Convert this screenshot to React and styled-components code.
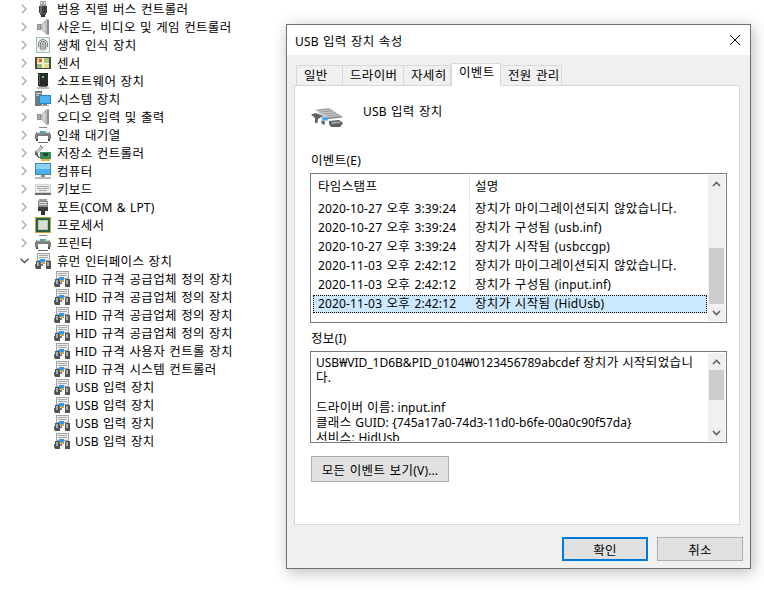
import React from 'react'
import styled, { createGlobalStyle } from 'styled-components'

const GlobalStyle = createGlobalStyle`
    html, body {
        margin: 0;
        padding: 0;
        background: #fff;
    }
    body {
        font-family: "Noto Sans", "Noto Sans CJK KR", sans-serif;
        font-size: 12px;
        letter-spacing: 0.15px;
        word-spacing: 1px;
        color: #000;
    }
`

// hangul runs are set slightly larger, Malgun Gothic fills its box more than Noto does
const Ko = styled.span`
    font-size: 12.5px;
    letter-spacing: 0.35px;
`
const Txt = ({ children }) => (
    <span>
        {children
            .split(/([\uAC00-\uD7A3]+)/)
            .map((part, i) => (i % 2 ? <Ko key={i}>{part}</Ko> : part))}
    </span>
)

// device icons, all drawn on a 16x16 grid
const Svg = ({ children }) => (
    <svg width="16" height="16" viewBox="0 0 16 16" shapeRendering="crispEdges">
        {children}
    </svg>
)

const UsbIcon = () => (
    <Svg>
        <rect x="5" y="0" width="6" height="5" fill="#a2a2a2" />
        <rect x="6" y="1" width="1" height="2" fill="#f4f4f4" />
        <rect x="9" y="1" width="1" height="2" fill="#f4f4f4" />
        <rect x="4" y="5" width="8" height="7" fill="#3e3e3e" />
        <rect x="5" y="5" width="2" height="7" fill="#6a6a6a" />
        <rect x="5" y="12" width="6" height="2" fill="#4c4c4c" />
        <rect x="6" y="14" width="4" height="2" fill="#2c2c2c" />
    </Svg>
)

const SpeakerIcon = () => (
    <Svg>
        <rect x="2" y="5" width="4" height="6" fill="#8a8a8a" />
        <rect x="3" y="6" width="2" height="4" fill="#b0b0b0" />
        <path d="M6 5 L12 0 H14 V16 H12 L6 11 Z" fill="#bcbcbc" />
        <rect x="8" y="4" width="2" height="8" fill="#d6d6d6" />
        <rect x="12" y="1" width="2" height="14" fill="#8c8c8c" />
    </Svg>
)

const FingerprintIcon = () => (
    <Svg>
        <rect x="1.5" y="0.5" width="13" height="15" fill="#eef3ee" stroke="#9cc0b4" />
        <g fill="none" stroke="#6a6a6a" strokeWidth="0.9" shapeRendering="auto">
            <path d="M3.6 10 V7 a4.4 4.4 0 0 1 8.8 0 V10" />
            <path d="M5.3 12.5 V7 a2.7 2.7 0 0 1 5.4 0 V12.5" />
            <path d="M7 13.5 V7 a1 1 0 0 1 2 0 V13.5" />
        </g>
    </Svg>
)

const SensorIcon = () => (
    <Svg>
        <rect x="0" y="2" width="16" height="12" fill="#44483f" />
        <rect x="2" y="3" width="12" height="10" fill="#ead982" />
        <rect x="2" y="9" width="5" height="4" fill="#92c06e" />
        <rect x="9" y="3" width="5" height="5" fill="#a4cb7f" />
        <rect x="4" y="4" width="3" height="3" fill="#e0584c" />
        <rect x="7" y="3" width="2" height="10" fill="#f6f2cc" />
        <rect x="2" y="8" width="12" height="1" fill="#f6f2cc" />
    </Svg>
)

const SoftwareIcon = () => (
    <Svg>
        <rect x="3" y="0" width="10" height="13" fill="#2a2a2a" />
        <rect x="4" y="1" width="1" height="11" fill="#5a5a5a" />
        <rect x="7" y="3" width="2" height="2" fill="#3fe05c" />
        <rect x="4" y="13" width="8" height="1" fill="#666" />
        <rect x="2" y="14" width="12" height="2" fill="#bdbdbd" />
    </Svg>
)

const SystemIcon = () => (
    <Svg>
        <rect x="0" y="0" width="7" height="15" fill="#6f7b80" />
        <rect x="1" y="2" width="5" height="1" fill="#e8e8e8" />
        <rect x="1" y="4" width="5" height="1" fill="#c4c4c4" />
        <rect x="4" y="4" width="12" height="9" fill="#1f86d0" />
        <rect x="5" y="5" width="10" height="7" fill="#4fb2ee" />
        <rect x="8" y="13" width="4" height="1" fill="#777" />
        <rect x="6" y="14" width="8" height="1" fill="#aaa" />
    </Svg>
)

const PrinterIcon = () => (
    <Svg>
        <rect x="4" y="0" width="8" height="5" fill="#fafafa" />
        <rect x="4" y="0" width="8" height="1" fill="#8a8a8a" />
        <rect x="1" y="5" width="14" height="7" fill="#8d8d8d" />
        <rect x="0" y="7" width="16" height="5" fill="#7d7d7d" />
        <rect x="2" y="5" width="12" height="1" fill="#d5d5d5" />
        <rect x="5" y="4" width="3" height="2" fill="#36a6e4" />
        <rect x="8" y="4" width="3" height="2" fill="#52c27a" />
        <rect x="3" y="9" width="10" height="6" fill="#fff" />
        <rect x="1" y="12" width="2" height="2" fill="#444" />
        <rect x="13" y="12" width="2" height="2" fill="#444" />
        <rect x="3" y="15" width="10" height="1" fill="#6a6a6a" />
    </Svg>
)

const StorageIcon = () => (
    <Svg>
        <path d="M0 6 L5 1 L8 3 L3 8 Z" fill="#c2c2c2" />
        <path d="M5 0 L8 2 L8 3 L5 1 Z" fill="#666" />
        <path d="M0 6 L3 8 V11 L6 13 L3 13 L0 9 Z" fill="#6a6a6a" />
        <rect x="5" y="7" width="11" height="7" fill="#3f8a58" />
        <rect x="8" y="8" width="5" height="3" fill="#1f4a30" />
        <rect x="6" y="14" width="9" height="2" fill="#e0b040" />
    </Svg>
)

const ComputerIcon = () => (
    <Svg>
        <rect x="0" y="0" width="16" height="12" fill="#4f7f9c" />
        <rect x="1" y="1" width="14" height="10" fill="#4db2ec" />
        <rect x="1" y="1" width="14" height="5" fill="#8cd3f6" />
        <rect x="6" y="12" width="4" height="2" fill="#8e8e8e" />
        <rect x="0" y="14" width="16" height="2" fill="#b8b8b8" />
    </Svg>
)

const KeyboardIcon = () => (
    <Svg>
        <rect x="0" y="3" width="16" height="10" fill="#d4d4d4" />
        <rect x="1" y="4" width="14" height="7" fill="#efefef" />
        <g fill="#a2a2a2">
            <rect x="2" y="5" width="12" height="1" />
            <rect x="2" y="7" width="12" height="1" />
            <rect x="4" y="9" width="8" height="1" />
        </g>
        <rect x="0" y="12" width="16" height="2" fill="#6a6a6a" />
    </Svg>
)

const PortIcon = () => (
    <Svg>
        <rect x="4" y="0" width="8" height="2" fill="#9a9a9a" />
        <rect x="3" y="2" width="10" height="6" fill="#8c8c8c" />
        <g fill="#e2e2e2">
            <rect x="4" y="3" width="8" height="1" />
            <rect x="4" y="5" width="8" height="1" />
        </g>
        <rect x="3" y="8" width="10" height="4" fill="#3c3c3c" />
        <rect x="6" y="12" width="4" height="4" fill="#333" />
    </Svg>
)

const ProcessorIcon = () => (
    <Svg>
        <rect x="0" y="0" width="16" height="16" fill="#c7a33f" />
        <rect x="1" y="1" width="14" height="14" fill="#27613f" />
        <rect x="3" y="3" width="10" height="10" fill="#b4c4b4" />
        <rect x="4" y="4" width="8" height="8" fill="#d8e0d8" />
    </Svg>
)

const HidIcon = () => (
    <Svg>
        <rect x="2" y="0" width="13" height="8" fill="#a4a4a4" />
        <rect x="3" y="1" width="11" height="6" fill="#ececec" />
        <g fill="#a8a8a8">
            <rect x="4" y="2" width="9" height="1" />
            <rect x="4" y="4" width="9" height="1" />
        </g>
        <rect x="1" y="8" width="5" height="8" fill="#4f5356" />
        <rect x="0" y="11" width="1" height="4" fill="#6a6a6a" />
        <rect x="2" y="9" width="2" height="4" fill="#a9adb0" />
        <rect x="11" y="8" width="5" height="8" fill="#4f5356" />
        <rect x="12" y="9" width="2" height="4" fill="#a9adb0" />
        <rect x="5" y="6" width="5" height="4" fill="#2f96ea" />
        <rect x="7" y="9" width="3" height="2" fill="#e0a030" />
        <rect x="6" y="11" width="2" height="2" fill="#7a7a7a" />
    </Svg>
)

const BigHidIcon = () => (
    <svg width="32" height="20" viewBox="0 0 32 20">
        <path d="M4 1.5 L18 0 L31 8 L13 10 Z" fill="#c4c8c8" />
        <path d="M7 2.2 L19 1 M10 4 L22 2.8 M13 6 L25 4.8 M16 8 L28 6.8" stroke="#8e9292" strokeWidth="0.9" />
        <path d="M13 10 L31 8 V9.5 L13 11.5 Z" fill="#7a7e7e" />
        <path d="M0 6.5 L5 5 L12 8 L7 11 L6.5 15 L4 15 L4 10 Z" fill="#5c6266" />
        <path d="M10 9.5 L16 9.5 L17 12.5 L12 12.5 Z" fill="#3f9fe8" />
        <path d="M10 12.5 L14 13 L13.5 17 L11 16 Z" fill="#63686b" />
        <path d="M18 13 L28 12 L32 15 L29 19 L20 19 L18 16 Z" fill="#5b6063" />
        <path d="M20 14 L28 13.5 L30 15 L21 16 Z" fill="#a4a8aa" />
    </svg>
)

const Chevron = ({ open }) =>
    open ? (
        <svg width="9" height="6" viewBox="0 0 9 6">
            <path d="M0.6 0.8 L4.5 4.7 L8.4 0.8" fill="none" stroke="#404040" strokeWidth="1.3" />
        </svg>
    ) : (
        <svg width="6" height="10" viewBox="0 0 6 10">
            <path d="M0.8 0.8 L5 5 L0.8 9.2" fill="none" stroke="#a6a6a6" strokeWidth="1.3" />
        </svg>
    )

const ArrowGlyph = ({ down }) => (
    <svg width="9" height="6" viewBox="0 0 9 6">
        <path
            d={down ? 'M1 1 L4.5 4.5 L8 1' : 'M1 5 L4.5 1.5 L8 5'}
            fill="none"
            stroke="#606060"
            strokeWidth="1.6"
        />
    </svg>
)

const categories = [
    ['범용 직렬 버스 컨트롤러', UsbIcon],
    ['사운드, 비디오 및 게임 컨트롤러', SpeakerIcon],
    ['생체 인식 장치', FingerprintIcon],
    ['센서', SensorIcon],
    ['소프트웨어 장치', SoftwareIcon],
    ['시스템 장치', SystemIcon],
    ['오디오 입력 및 출력', SpeakerIcon],
    ['인쇄 대기열', PrinterIcon],
    ['저장소 컨트롤러', StorageIcon],
    ['컴퓨터', ComputerIcon],
    ['키보드', KeyboardIcon],
    ['포트(COM & LPT)', PortIcon],
    ['프로세서', ProcessorIcon],
    ['프린터', PrinterIcon],
]

const hidDevices = [
    'HID 규격 공급업체 정의 장치',
    'HID 규격 공급업체 정의 장치',
    'HID 규격 공급업체 정의 장치',
    'HID 규격 공급업체 정의 장치',
    'HID 규격 사용자 컨트롤 장치',
    'HID 규격 시스템 컨트롤러',
    'USB 입력 장치',
    'USB 입력 장치',
    'USB 입력 장치',
    'USB 입력 장치',
]

const events = [
    ['2020-10-27 오후 3:39:24', '장치가 마이그레이션되지 않았습니다.'],
    ['2020-10-27 오후 3:39:24', '장치가 구성됨 (usb.inf)'],
    ['2020-10-27 오후 3:39:24', '장치가 시작됨 (usbccgp)'],
    ['2020-11-03 오후 2:42:12', '장치가 마이그레이션되지 않았습니다.'],
    ['2020-11-03 오후 2:42:12', '장치가 구성됨 (input.inf)'],
    ['2020-11-03 오후 2:42:12', '장치가 시작됨 (HidUsb)'],
]

const tabs = [
    ['일반', 47],
    ['드라이버', 61],
    ['자세히', 47],
    ['이벤트', 50],
    ['전원 관리', 61],
]

const infoLines = [
    'USB₩VID_1D6B&PID_0104₩0123456789abcdef 장치가 시작되었습니',
    '다.',
    '\u00a0',
    '드라이버 이름: input.inf',
    '클래스 GUID: {745a17a0-74d3-11d0-b6fe-00a0c90f57da}',
    '서비스: HidUsb',
]

const App = () => {
    return (
        <Page>
            <GlobalStyle />
            <Tree>
                {categories.map(([label, Icon]) => (
                    <TreeRow key={label}>
                        <Twisty>
                            <Chevron />
                        </Twisty>
                        <Icon />
                        <TreeLabel>
                            <Txt>{label}</Txt>
                        </TreeLabel>
                    </TreeRow>
                ))}
                <TreeRow>
                    <Twisty $open>
                        <Chevron open />
                    </Twisty>
                    <HidIcon />
                    <TreeLabel>
                        <Txt>휴먼 인터페이스 장치</Txt>
                    </TreeLabel>
                </TreeRow>
                {hidDevices.map((label, i) => (
                    <TreeRow key={i} $child>
                        <HidIcon />
                        <TreeLabel $child>
                            <Txt>{label}</Txt>
                        </TreeLabel>
                    </TreeRow>
                ))}
            </Tree>

            <Dialog>
                <TitleBar>
                    <Txt>USB 입력 장치 속성</Txt>
                    <CloseGlyph width="12" height="12" viewBox="0 0 12 12">
                        <path d="M1 1 L11 11 M11 1 L1 11" stroke="#000" strokeWidth="1" fill="none" />
                    </CloseGlyph>
                </TitleBar>
                <DialogBody>
                    <TabStrip>
                        {tabs.map(([label, width]) => (
                            <Tab key={label} $width={width} $active={label === '이벤트'}>
                                <Txt>{label}</Txt>
                            </Tab>
                        ))}
                    </TabStrip>
                    <Panel>
                        <DeviceHeader>
                            <BigHidIcon />
                            <DeviceName>
                                <Txt>USB 입력 장치</Txt>
                            </DeviceName>
                        </DeviceHeader>

                        <FieldLabel>
                            <Txt>이벤트(E)</Txt>
                        </FieldLabel>
                        <EventBox>
                            <EventTable>
                                <HeaderRow>
                                    <TimeCell>
                                        <Txt>타임스탬프</Txt>
                                    </TimeCell>
                                    <DescCell>
                                        <Txt>설명</Txt>
                                    </DescCell>
                                </HeaderRow>
                                {events.map(([time, desc], i) => (
                                    <EventRow key={i} $selected={i === events.length - 1}>
                                        <TimeCell>
                                            <Txt>{time}</Txt>
                                        </TimeCell>
                                        <DescCell>
                                            <Txt>{desc}</Txt>
                                        </DescCell>
                                    </EventRow>
                                ))}
                            </EventTable>
                            <Scrollbar>
                                <ArrowButton>
                                    <ArrowGlyph />
                                </ArrowButton>
                                <Track>
                                    <Thumb $top={56} $height={56} />
                                </Track>
                                <ArrowButton>
                                    <ArrowGlyph down />
                                </ArrowButton>
                            </Scrollbar>
                        </EventBox>

                        <InfoLabel>
                            <Txt>정보(I)</Txt>
                        </InfoLabel>
                        <InfoBox>
                            <InfoText>
                                {infoLines.map((line, i) => (
                                    <InfoLine key={i}>
                                        <Txt>{line}</Txt>
                                    </InfoLine>
                                ))}
                            </InfoText>
                            <Scrollbar>
                                <ArrowButton>
                                    <ArrowGlyph />
                                </ArrowButton>
                                <Track>
                                    <Thumb $top={0} $height={30} />
                                </Track>
                                <ArrowButton>
                                    <ArrowGlyph down />
                                </ArrowButton>
                            </Scrollbar>
                        </InfoBox>

                        <ShowAllButton>
                            <Txt>모든 이벤트 보기(V)...</Txt>
                        </ShowAllButton>
                    </Panel>
                    <Footer>
                        <FooterButton $primary>
                            <Txt>확인</Txt>
                        </FooterButton>
                        <FooterButton>
                            <Txt>취소</Txt>
                        </FooterButton>
                    </Footer>
                </DialogBody>
            </Dialog>
        </Page>
    )
}

const Page = styled.div`
    display: flex;
    align-items: flex-start;
    width: 764px;
    height: 590px;
    overflow: hidden;
    background: #fff;
`
const Tree = styled.div`
    width: 286px;
    flex: none;
    display: flex;
    flex-direction: column;
`
const TreeRow = styled.div`
    display: flex;
    align-items: center;
    height: 18px;
    padding-left: ${(p) => (p.$child ? '54px' : '0')};
`
const Twisty = styled.div`
    width: 35px;
    flex: none;
    display: flex;
    align-items: center;
    padding-left: ${(p) => (p.$open ? '20px' : '21px')};
    box-sizing: border-box;
`
const TreeLabel = styled.span`
    margin-left: ${(p) => (p.$child ? '5px' : '6px')};
    padding-top: 1px;
    white-space: nowrap;
    line-height: 18px;
`
const Dialog = styled.div`
    width: 465px;
    height: 545px;
    margin-top: 24px;
    flex: none;
    box-sizing: border-box;
    border: 1px solid #707070;
    background: #f0f0f0;
    box-shadow: 2px 3px 14px rgba(0, 0, 0, 0.28);
    display: flex;
    flex-direction: column;
`
const TitleBar = styled.div`
    height: 30px;
    flex: none;
    background: #fff;
    display: flex;
    align-items: center;
    justify-content: space-between;
    padding: 0 9px 0 8px;
`
const CloseGlyph = styled.svg`
    display: block;
`
const DialogBody = styled.div`
    flex: 1;
    display: flex;
    flex-direction: column;
    padding: 0 10px 0 7px;
`
const TabStrip = styled.div`
    height: 30px;
    flex: none;
    display: flex;
    align-items: flex-end;
    padding-left: 2px;
`
const Tab = styled.div`
    width: ${(p) => p.$width}px;
    height: ${(p) => (p.$active ? '23px' : '20px')};
    box-sizing: border-box;
    display: flex;
    align-items: ${(p) => (p.$active ? 'flex-start' : 'center')};
    padding-left: 7px;
    line-height: 18px;
    white-space: nowrap;
    background: ${(p) => (p.$active ? '#fff' : '#f0f0f0')};
    border: 1px solid #d9d9d9;
    border-bottom: none;
    border-left: ${(p) => (p.$active ? '1px solid #d9d9d9' : 'none')};
    margin-bottom: ${(p) => (p.$active ? '-1px' : '0')};
    position: relative;
    z-index: ${(p) => (p.$active ? 1 : 0)};
    &:first-child {
        border-left: 1px solid #d9d9d9;
    }
`
const Panel = styled.div`
    width: 446px;
    height: 440px;
    flex: none;
    box-sizing: border-box;
    background: #fff;
    border: 1px solid #d9d9d9;
    padding: 22px 12px 0 15px;
    display: flex;
    flex-direction: column;
`
const DeviceHeader = styled.div`
    height: 42px;
    flex: none;
    display: flex;
    align-items: flex-start;
    padding-left: 1px;
`
const DeviceName = styled.span`
    margin: -5px 0 0 20px;
    line-height: 18px;
`
const FieldLabel = styled.div`
    height: 20px;
    flex: none;
    margin: 0 0 2px 1px;
    padding-top: 1px;
    line-height: 20px;
`
const InfoLabel = styled(FieldLabel)`
    margin-top: 5px;
`
const EventBox = styled.div`
    height: 150px;
    flex: none;
    box-sizing: border-box;
    border: 1px solid #7a7a7a;
    display: flex;
    padding: 1px;
`
const InfoBox = styled(EventBox)`
    height: 92px;
`
const EventTable = styled.div`
    flex: 1;
    min-width: 0;
    overflow: hidden;
    background: linear-gradient(#f0f0f0, #f0f0f0) 157px 0 / 1px 100% no-repeat;
`
const HeaderRow = styled.div`
    display: flex;
    height: 24px;
    align-items: center;
    line-height: 24px;
    background: linear-gradient(#e5e5e5, #e5e5e5) 157px 0 / 1px 100% no-repeat;
`
const TimeCell = styled.div`
    width: 157px;
    flex: none;
    padding-left: 6px;
    box-sizing: border-box;
    white-space: nowrap;
`
const DescCell = styled.div`
    padding-left: 6px;
    white-space: nowrap;
`
const EventRow = styled.div`
    display: flex;
    align-items: center;
    height: 19px;
    line-height: 17px;
    position: relative;
    isolation: isolate;
    &::before {
        content: '';
        display: ${(p) => (p.$selected ? 'block' : 'none')};
        position: absolute;
        inset: 1px 1px 0 1px;
        z-index: -1;
        background: #cce8ff;
        outline: 1px dotted #000;
        outline-offset: -1px;
    }
`
const InfoText = styled.div`
    flex: 1;
    min-width: 0;
    overflow: hidden;
    padding: 2px 0 0 4px;
    line-height: 15px;
    white-space: nowrap;
    letter-spacing: 0;
    word-spacing: 0.5px;
`
const InfoLine = styled.div`
    height: 15px;
`
const Scrollbar = styled.div`
    width: 17px;
    flex: none;
    display: flex;
    flex-direction: column;
    background: #f0f0f0;
`
const ArrowButton = styled.div`
    height: 17px;
    flex: none;
    display: flex;
    align-items: center;
    justify-content: center;
`
const Track = styled.div`
    flex: 1;
    position: relative;
`
const Thumb = styled.div`
    position: absolute;
    left: 1px;
    right: 1px;
    top: ${(p) => p.$top}px;
    height: ${(p) => p.$height}px;
    background: #cdcdcd;
`
const ShowAllButton = styled.button`
    width: 138px;
    height: 26px;
    margin: 13px 0 0 1px;
    padding: 0;
    box-sizing: border-box;
    background: #e1e1e1;
    border: 1px solid #adadad;
    font: inherit;
    letter-spacing: inherit;
    word-spacing: inherit;
    color: #000;
`
const Footer = styled.div`
    display: flex;
    justify-content: flex-end;
    gap: 9px;
    margin: 12px -3px 0 0;
`
const FooterButton = styled.button`
    width: 86px;
    height: 24px;
    padding: 0;
    box-sizing: border-box;
    background: #e1e1e1;
    border: ${(p) => (p.$primary ? '2px solid #0078d7' : '1px solid #adadad')};
    font: inherit;
    letter-spacing: inherit;
    color: #000;
`

export default App
